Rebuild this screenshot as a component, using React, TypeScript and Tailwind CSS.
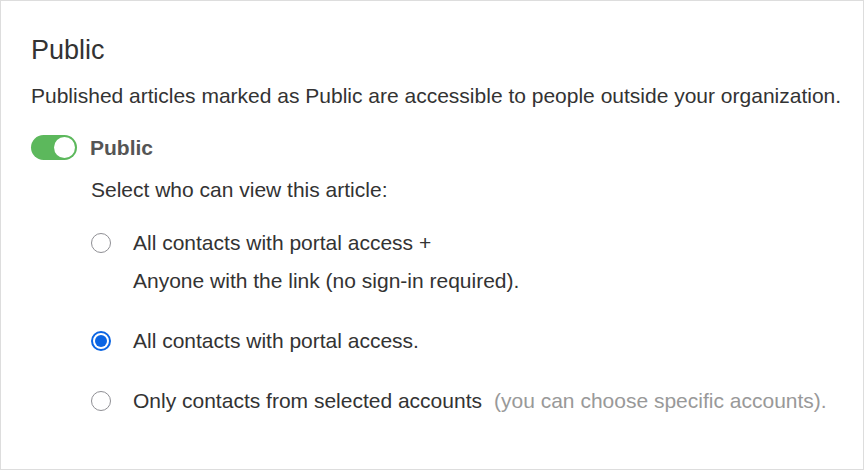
import React from "react";

type Option = { id: string; lines: string[]; hint?: string };

const options: Option[] = [
  { id: "all-link", lines: ["All contacts with portal access +", "Anyone with the link (no sign-in required)."] },
  { id: "portal", lines: ["All contacts with portal access."] },
  { id: "accounts", lines: ["Only contacts from selected accounts"], hint: "(you can choose specific accounts)." },
];

function Radio({ checked }: { checked: boolean }) {
  if (checked) {
    return (
      <span className="w-[20px] h-[20px] rounded-full border-2 border-[#0b65e3] flex items-center justify-center shrink-0">
        <span className="w-[12px] h-[12px] rounded-full bg-[#0b65e3]" />
      </span>
    );
  }
  return <span className="w-[20px] h-[20px] rounded-full border border-[#8f8f94] bg-white shrink-0" />;
}

export default function App() {
  const selected = "portal";

  return (
    <div className="h-[470px] w-[864px] border border-[#dddddd] bg-white pl-[30px] pr-[10px] pt-[33px] text-[#333333] font-['Liberation_Sans',Arial,sans-serif]">
      <h2 className="text-[27px] leading-[32px] font-normal">Public</h2>
      <p className="mt-[18px] text-[21px] leading-[24px] whitespace-nowrap">
        Published articles marked as Public are accessible to people outside your organization.
      </p>

      {/* Toggle */}
      <div className="mt-[27px] flex items-center gap-[13px]">
        <span className="w-[46px] h-[25px] rounded-full bg-[#5cb85c] flex items-center justify-end pr-[2px]">
          <span className="w-[21px] h-[21px] rounded-full bg-white" />
        </span>
        <span className="text-[21px] leading-[24px] font-bold text-[#555555]">Public</span>
      </div>

      <div className="pl-[60px]">
        <p className="mt-[18px] text-[21px] leading-[24px]">Select who can view this article:</p>

        <div className="mt-[22px] flex flex-col gap-[22px]">
          {options.map(o => (
            <div key={o.id} className="flex items-start gap-[22px]">
              <div className="h-[38px] flex items-center">
                <Radio checked={o.id === selected} />
              </div>
              <div className="text-[21px] leading-[38px]">
                {o.lines.map((l, i) => (
                  <div key={i}>
                    {l}
                    {o.hint && <span className="ml-[12px] text-[#999999]">{o.hint}</span>}
                  </div>
                ))}
              </div>
            </div>
          ))}
        </div>
      </div>
    </div>
  );
}
